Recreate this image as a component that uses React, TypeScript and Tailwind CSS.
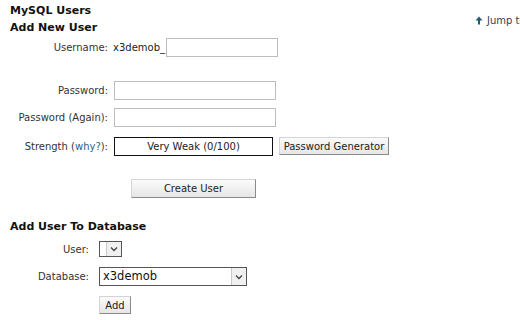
import React from "react";

function Btn({ children, className = "" }: { children: React.ReactNode; className?: string }) {
  return (
    <div
      className={
        "flex items-center justify-center whitespace-nowrap bg-gradient-to-b from-[#fbfbfb] to-[#e6e6e6] border border-[#d4d4d4] border-r-[#8a8a8a] border-b-[#8a8a8a] text-[#222] " +
        className
      }
    >
      {children}
    </div>
  );
}

function Chevron() {
  return (
    <svg width="8" height="6" viewBox="0 0 8 6">
      <path d="M1 1.5 L4 4.5 L7 1.5" fill="none" stroke="#444" strokeWidth="1.3" />
    </svg>
  );
}

function Select({ value, className = "" }: { value?: string; className?: string }) {
  return (
    <div className={"flex items-stretch border border-[#555] bg-white " + className}>
      <div className="flex-1 flex items-center pl-[3px] text-[11.5px] text-[#111]">{value}</div>
      <div className="w-[15px] flex items-center justify-center bg-[#f0f0f0] border-l border-[#c8c8c8]">
        <Chevron />
      </div>
    </div>
  );
}

export default function App() {
  return (
    <div
      className="w-[520px] h-[320px] overflow-hidden bg-white pl-[10px] pt-[4px] text-[10px] text-[#333] whitespace-nowrap"
      style={{ fontFamily: '"DejaVu Sans", Verdana, sans-serif' }}
    >
      <div className="font-bold text-[#111] leading-[13px] text-[11px]">MySQL Users</div>
      <div className="flex items-start mt-[4px] leading-[13px]">
        <div className="flex-1 font-bold text-[#111] text-[11px]">Add New User</div>
        <div className="w-[45px] shrink-0 whitespace-nowrap flex items-center gap-[4px] text-[#2e4257] mt-[-7px]">
          <svg width="8" height="9" viewBox="0 0 8 9" className="shrink-0">
            <path d="M4 0.5 L7.5 4.5 L5 4.5 L5 8.5 L3 8.5 L3 4.5 L0.5 4.5 Z" fill="#245a70" />
          </svg>
          <span>Jump to</span>
        </div>
      </div>

      <div className="grid grid-cols-[98px_1fr] gap-x-[6px] mt-[4px]">
        <div className="h-[19px] flex items-center justify-end">Username:</div>
        <div className="h-[19px] flex items-center">
          <span className="ml-[-1px] mr-[1px] text-[#222]">x3demob_</span>
          <div className="w-[112px] h-[19px] border border-[#bdbdbd] bg-white" />
        </div>

        <div className="h-[19px] flex items-center justify-end mt-[24px]">Password:</div>
        <div className="h-[19px] mt-[24px]">
          <div className="w-[162px] h-[19px] border border-[#bdbdbd] bg-white" />
        </div>

        <div className="h-[19px] flex items-center justify-end mt-[8px]">Password (Again):</div>
        <div className="h-[19px] mt-[8px]">
          <div className="w-[162px] h-[19px] border border-[#bdbdbd] bg-white" />
        </div>

        <div className="h-[19px] flex items-center justify-end mt-[10px]">
          Strength (<span className="text-[#2b5f8a]">why?</span>):
        </div>
        <div className="h-[19px] mt-[10px] flex items-start gap-[6px]">
          <div className="w-[159px] h-[19px] border border-[#111] bg-white flex items-center justify-center text-[#222]">
            Very Weak (0/100)
          </div>
          <Btn className="w-[110px] h-[18px]">Password Generator</Btn>
        </div>

        <div className="mt-[23px]" />
        <div className="mt-[23px]">
          <Btn className="ml-[17px] w-[125px] h-[19px]">Create User</Btn>
        </div>
      </div>

      <div className="font-bold text-[#111] leading-[13px] text-[11px] mt-[22px]">Add User To Database</div>

      <div className="grid grid-cols-[79px_1fr] gap-x-[10px] mt-[8px]">
        <div className="h-[16px] flex items-center justify-end">User:</div>
        <div className="h-[16px]">
          <Select className="w-[23px] h-[16px]" />
        </div>

        <div className="h-[19px] flex items-center justify-end mt-[10px]">Database:</div>
        <div className="h-[19px] mt-[10px]">
          <Select value="x3demob" className="w-[148px] h-[19px]" />
        </div>

        <div className="mt-[10px]" />
        <div className="mt-[10px]">
          <Btn className="w-[32px] h-[18px]">Add</Btn>
        </div>
      </div>
    </div>
  );
}
